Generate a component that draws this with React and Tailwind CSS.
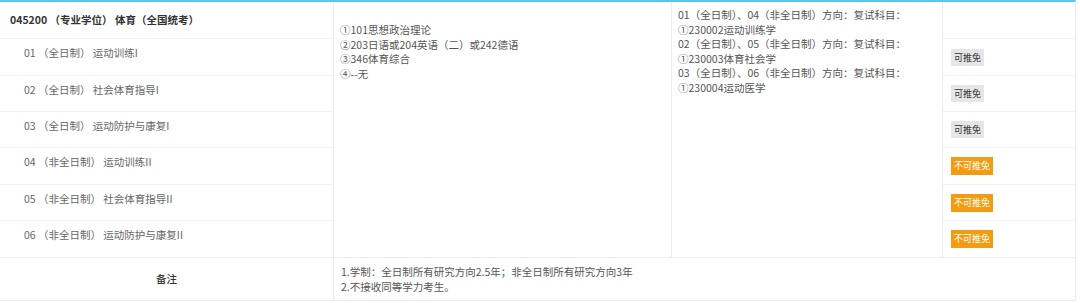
import React from "react";

const rows = [
  { label: "01 （全日制） 运动训练I", free: true, h: "h-[37px]" },
  { label: "02 （全日制） 社会体育指导I", free: true, h: "h-[36px]" },
  { label: "03 （全日制） 运动防护与康复I", free: true, h: "h-[36px]" },
  { label: "04 （非全日制） 运动训练II", free: false, h: "h-[37px]" },
  { label: "05 （非全日制） 社会体育指导II", free: false, h: "h-[36px]" },
  { label: "06 （非全日制） 运动防护与康复II", free: false, h: "h-[36px]" },
];

const exams = ["①101思想政治理论", "②203日语或204英语（二）或242德语", "③346体育综合", "④--无"];

const retest = [
  "01（全日制）、04（非全日制）方向：复试科目：",
  "①230002运动训练学",
  "02（全日制）、05（非全日制）方向：复试科目：",
  "①230003体育社会学",
  "03（全日制）、06（非全日制）方向：复试科目：",
  "①230004运动医学",
];

const Badge = ({ free }) =>
  free ? (
    <span className="inline-block bg-[#e6e6e6] text-[#333] px-[3px] py-[3px] leading-[11px]">可推免</span>
  ) : (
    <span className="inline-block bg-[#f39c12] text-white px-[3px] py-[3px] leading-[12px]">不可推免</span>
  );

export default function App() {
  return (
    <div className="w-[1080px] h-[303px] bg-white font-['Noto_Sans_CJK_SC',sans-serif] text-[10.5px]">
      <div className="w-[1076px] border-t-2 border-[#5cc4ee] border-b border-r border-b-[#e9edf0] border-r-[#e9edf0]">
        <div className="flex border-b border-[#e9edf0]">
          <div className="w-[334px] shrink-0 border-r border-[#e9edf0]">
            <div className="h-[37px] flex items-center pl-[10px] font-bold text-[10.5px] text-[#333] border-b border-[#f0f2f4]">
              045200 （专业学位） 体育（全国统考）
            </div>
            {rows.map((r, i) => (
              <div
                key={r.label}
                className={`${r.h} pl-[24px] pt-[6px] text-[10.5px] text-[#666] ${i < rows.length - 1 ? "border-b border-[#f0f2f4]" : ""}`}
              >
                {r.label}
              </div>
            ))}
          </div>
          <div className="w-[338px] shrink-0 border-r border-[#e9edf0] pl-[6px] pt-[21px] text-[#555] leading-[14.5px]">
            {exams.map((t) => (
              <div key={t}>{t}</div>
            ))}
          </div>
          <div className="w-[271px] shrink-0 border-r border-[#e9edf0] pl-[6px] pt-[6px] text-[#555] leading-[14.6px] text-[10.5px]">
            {retest.map((t) => (
              <div key={t}>{t}</div>
            ))}
          </div>
          <div className="flex-1">
            <div className="h-[37px] border-b border-[#f0f2f4]" />
            {rows.map((r, i) => (
              <div
                key={r.label}
                className={`${r.h} flex items-center pl-[8px] text-[9px] ${i < rows.length - 1 ? "border-b border-[#f0f2f4]" : ""}`}
              >
                <Badge free={r.free} />
              </div>
            ))}
          </div>
        </div>
        <div className="flex h-[42px]">
          <div className="w-[334px] shrink-0 border-r border-[#e9edf0] flex items-center justify-center font-medium text-[#333]">
            备注
          </div>
          <div className="flex-1 pl-[7px] pt-[7px] text-[#555] leading-[14.5px]">
            <div>1.学制：全日制所有研究方向2.5年；非全日制所有研究方向3年</div>
            <div>2.不接收同等学力考生。</div>
          </div>
        </div>
      </div>
    </div>
  );
}
